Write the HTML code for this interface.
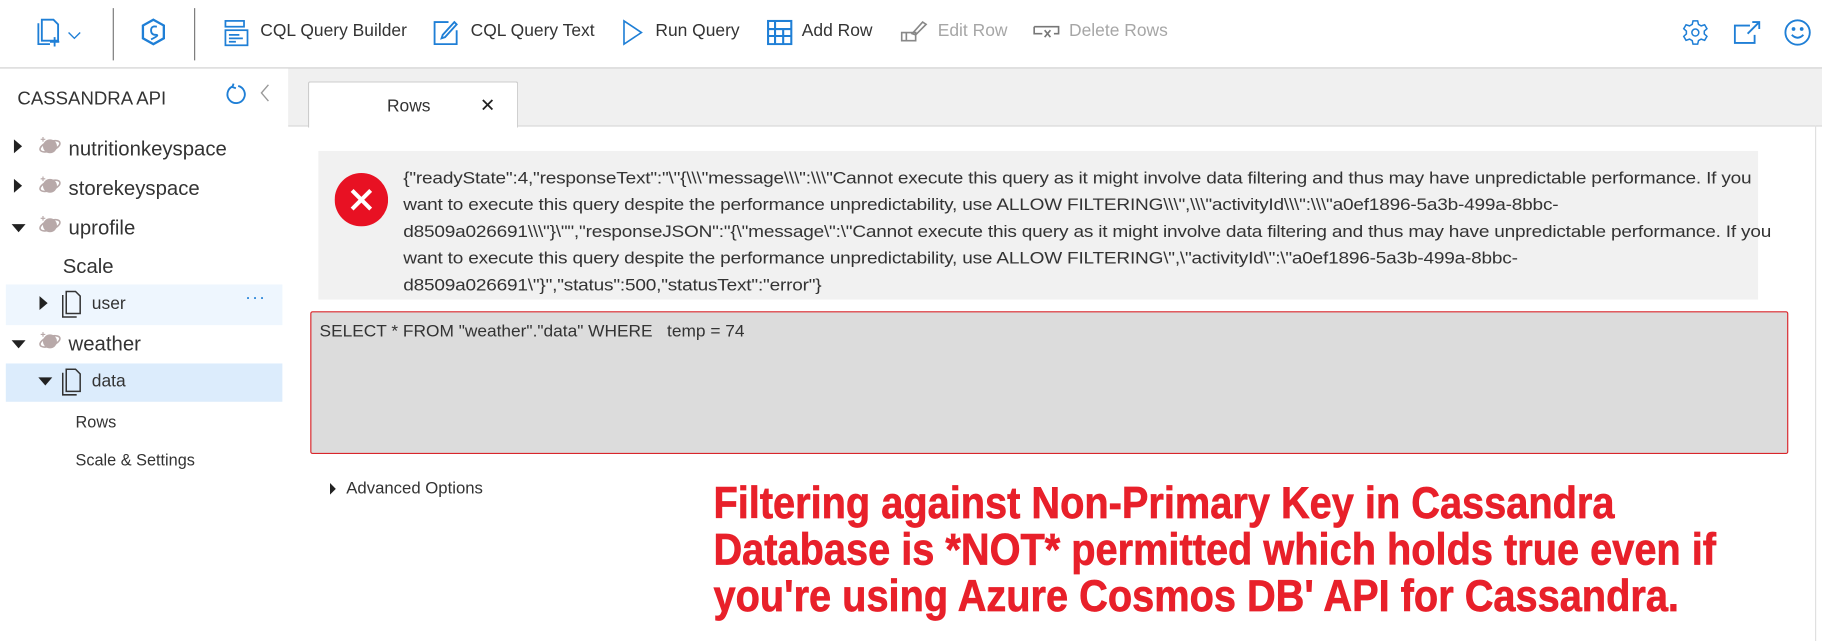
<!DOCTYPE html>
<html><head><meta charset="utf-8"><style>
html,body{margin:0;padding:0;width:1822px;height:641px;overflow:hidden;background:#fff}
#s{position:absolute;left:0;top:0;width:1568px;height:552px;transform:scale(1.16199,1.1612);transform-origin:0 0;font-family:"Liberation Sans",sans-serif;color:#333}
.a{position:absolute;white-space:nowrap}
.tb{font-size:15px;top:18px;color:#333}
.dis{color:#a6a6a6}
.tree{font-size:17.5px;color:#333}
.ic{position:absolute}
</style></head><body><div id="s">
<div class="a" style="left:0;top:58px;width:1568px;height:1px;background:#d0d0d0"></div>
<div class="a" style="left:97px;top:7px;width:1px;height:45px;background:#777"></div>
<div class="a" style="left:167px;top:7px;width:1px;height:45px;background:#777"></div>
<svg class="ic" style="left:32px;top:15px" width="60" height="28" viewBox="0 0 60 28" fill="none" stroke="#1f7fd6" stroke-width="1.6"><path d="M4 2h10l4 4v14H4z"/><path d="M1 5v18h10"/><path d="M15 17v8M11 21h8"/><path d="M27 13l5 5 5-5" stroke-width="1.2"/></svg>
<svg class="ic" style="left:120px;top:15px" width="24" height="26" viewBox="0 0 24 26" fill="none" stroke="#1f7fd6" stroke-width="2"><path d="M12 2l9 5v11l-9 5-9-5V7z"/><path d="M15 8q-5-1-5 3t4 4-4 4" stroke-width="1.6"/></svg>
<svg class="ic" style="left:193px;top:17px" width="22" height="24" viewBox="0 0 22 24" fill="none" stroke="#1f7fd6" stroke-width="1.5"><rect x="1" y="1" width="16" height="5"/><rect x="1" y="9" width="19" height="13"/><path d="M4 13h9M4 16h12M4 19h6"/></svg>
<div class="a tb" style="left:224px">CQL Query Builder</div>
<svg class="ic" style="left:373px;top:17px" width="22" height="22" viewBox="0 0 22 22" fill="none" stroke="#1f7fd6" stroke-width="1.6"><path d="M13 2H1v19h19V9"/><path d="M18 2l2 2-10 11-3 1 1-3z"/></svg>
<div class="a tb" style="left:405px">CQL Query Text</div>
<svg class="ic" style="left:535px;top:16px" width="20" height="24" viewBox="0 0 20 24" fill="none" stroke="#1f7fd6" stroke-width="1.4"><path d="M2 2l15 10L2 22z"/></svg>
<div class="a tb" style="left:564px">Run Query</div>
<svg class="ic" style="left:660px;top:17px" width="22" height="22" viewBox="0 0 22 22" fill="none" stroke="#1f7fd6" stroke-width="1.8"><path d="M1 1h20v20H1zM1 8h20M1 14h20M7 1v20M14 8v13"/></svg>
<div class="a tb" style="left:690px">Add Row</div>
<svg class="ic" style="left:775px;top:17px" width="24" height="20" viewBox="0 0 24 20" fill="none" stroke="#888" stroke-width="1.4"><path d="M1 11h12v7H1zM5 11v7"/><path d="M10 12l9-10 3 2-9 9z"/></svg>
<div class="a tb dis" style="left:807px">Edit Row</div>
<svg class="ic" style="left:889px;top:20px" width="24" height="14" viewBox="0 0 24 14" fill="none" stroke="#777" stroke-width="1.4"><path d="M1 3h21v6h-4M8 9H1V3"/><path d="M10 6l5 6M15 6l-5 6"/></svg>
<div class="a tb dis" style="left:920px">Delete Rows</div>
<svg class="ic" style="left:1448px;top:17px" width="22" height="22" viewBox="0 0 22 22" fill="none" stroke="#1f7fd6" stroke-width="1.3"><circle cx="11" cy="11" r="3"/><path d="M9 1h4l.7 3 2.3 1.3 3-1 2 3.4-2.3 2.1v2.4l2.3 2.1-2 3.4-3-1-2.3 1.3L13 21H9l-.7-3-2.3-1.3-3 1-2-3.4 2.3-2.1V9.8L1 7.7l2-3.4 3 1L8.3 4z"/></svg>
<svg class="ic" style="left:1492px;top:17px" width="24" height="22" viewBox="0 0 24 22" fill="none" stroke="#1f7fd6" stroke-width="1.6"><path d="M14 5H1v15h17v-7"/><path d="M12 12l10-10M16 2h6v6"/></svg>
<svg class="ic" style="left:1535px;top:16px" width="24" height="24" viewBox="0 0 24 24" fill="none" stroke="#1f7fd6" stroke-width="1.6"><circle cx="12" cy="12" r="10.5"/><circle cx="8.5" cy="9" r=".8" fill="#1f7fd6"/><circle cx="15.5" cy="9" r=".8" fill="#1f7fd6"/><path d="M7 14q5 5 10 0"/></svg>

<div class="a" style="left:15px;top:77px;font-size:16px;color:#333">CASSANDRA API</div>
<svg class="ic" style="left:194px;top:71px" width="20" height="20" viewBox="0 0 20 20" fill="none" stroke="#1f7fd6" stroke-width="1.6"><path d="M6 3.5A7.5 7.5 0 1 0 11 3"/><path d="M7 1l-1 3 3 1"/></svg>
<svg class="ic" style="left:223px;top:72px" width="10" height="16" viewBox="0 0 10 16" fill="none" stroke="#999" stroke-width="1.2"><path d="M8 1L2 8l6 7"/></svg>

<div class="a" style="left:5px;top:245px;width:238px;height:35px;background:#eef6fe"></div>
<div class="a" style="left:5px;top:313px;width:238px;height:33px;background:#dcecfc"></div>

<svg width="0" height="0" style="position:absolute"><defs>
<g id="pl"><ellipse cx="10" cy="9" rx="9" ry="4" transform="rotate(-20 10 9)" fill="none" stroke="#b8a9a9" stroke-width="1.4"/><circle cx="10" cy="9" r="6" fill="#b8a9a9"/><path d="M4 1v4M2 3h4" stroke="#b8a9a9"/></g>
<g id="doc" fill="none" stroke="#333" stroke-width="1.3"><path d="M4 1h8l4 4v15H4z"/><path d="M1 4v19h12"/></g>
</defs></svg>

<div class="a" style="left:12px;top:120px;width:0;height:0;border-top:6px solid transparent;border-bottom:6px solid transparent;border-left:7px solid #222"></div>
<svg class="ic" style="left:33px;top:117px" width="22" height="20"><use href="#pl"/></svg>
<div class="a tree" style="left:59px;top:118px">nutritionkeyspace</div>
<div class="a" style="left:12px;top:154px;width:0;height:0;border-top:6px solid transparent;border-bottom:6px solid transparent;border-left:7px solid #222"></div>
<svg class="ic" style="left:33px;top:151px" width="22" height="20"><use href="#pl"/></svg>
<div class="a tree" style="left:59px;top:152px">storekeyspace</div>
<div class="a" style="left:10px;top:193px;width:0;height:0;border-left:6px solid transparent;border-right:6px solid transparent;border-top:7px solid #222"></div>
<svg class="ic" style="left:33px;top:185px" width="22" height="20"><use href="#pl"/></svg>
<div class="a tree" style="left:59px;top:186px">uprofile</div>
<div class="a tree" style="left:54px;top:219px">Scale</div>
<div class="a" style="left:34px;top:255px;width:0;height:0;border-top:6px solid transparent;border-bottom:6px solid transparent;border-left:7px solid #222"></div>
<svg class="ic" style="left:53px;top:250px" width="18" height="25"><use href="#doc"/></svg>
<div class="a" style="left:79px;top:253px;font-size:15px">user</div>
<div class="a" style="left:211px;top:248px;font-size:15px;color:#1f7fd6;letter-spacing:1px">···</div>
<div class="a" style="left:10px;top:293px;width:0;height:0;border-left:6px solid transparent;border-right:6px solid transparent;border-top:7px solid #222"></div>
<svg class="ic" style="left:33px;top:285px" width="22" height="20"><use href="#pl"/></svg>
<div class="a tree" style="left:59px;top:286px">weather</div>
<div class="a" style="left:33px;top:325px;width:0;height:0;border-left:6px solid transparent;border-right:6px solid transparent;border-top:7px solid #222"></div>
<svg class="ic" style="left:53px;top:317px" width="18" height="25"><use href="#doc"/></svg>
<div class="a" style="left:79px;top:320px;font-size:15px">data</div>
<div class="a" style="left:65px;top:355px;font-size:14px">Rows</div>
<div class="a" style="left:65px;top:388px;font-size:14px">Scale &amp; Settings</div>

<div class="a" style="left:248px;top:59px;width:1320px;height:49px;background:#f0f0f0"></div>
<div class="a" style="left:248px;top:108px;width:1320px;height:1px;background:#d6d6d6"></div>
<div class="a" style="left:1562px;top:108px;width:1px;height:444px;background:#e0e0e0"></div>
<div class="a" style="left:265px;top:70px;width:179px;height:39px;background:#fff;border:1px solid #ccc;border-bottom:none;border-radius:2px 2px 0 0"></div>
<div class="a" style="left:333px;top:83px;font-size:15px">Rows</div>
<div class="a" style="left:413px;top:81px;font-size:16px;color:#222">✕</div>

<div class="a" style="left:274px;top:130px;width:1239px;height:128px;background:#f1f1f1"></div>
<svg class="ic" style="left:288px;top:149px" width="46" height="46" viewBox="0 0 46 46"><circle cx="23" cy="23" r="23" fill="#e81123"/><path d="M15 15l16 16M31 15L15 31" stroke="#fff" stroke-width="3.5"/></svg>
<div class="a" style="left:347px;top:142px;font-size:14px;line-height:23px;color:#333;letter-spacing:-0.15px;transform:scaleX(1.17);transform-origin:0 0">{"readyState":4,"responseText":"\"{\\\"message\\\":\\\"Cannot execute this query as it might involve data filtering and thus may have unpredictable performance. If you<br>want to execute this query despite the performance unpredictability, use ALLOW FILTERING\\\",\\\"activityId\\\":\\\"a0ef1896-5a3b-499a-8bbc-<br>d8509a026691\\\"}\"","responseJSON":"{\"message\":\"Cannot execute this query as it might involve data filtering and thus may have unpredictable performance. If you<br>want to execute this query despite the performance unpredictability, use ALLOW FILTERING\",\"activityId\":\"a0ef1896-5a3b-499a-8bbc-<br>d8509a026691\"}","status":500,"statusText":"error"}</div>

<div class="a" style="left:267px;top:268px;width:1270px;height:121px;background:#dcdcdc;border:1px solid #d9262b;border-radius:2px"></div>
<div class="a" style="left:275px;top:278px;font-size:14.2px;color:#333;transform:scaleX(1.05);transform-origin:0 0">SELECT * FROM "weather"."data" WHERE &nbsp; temp = 74</div>

<div class="a" style="left:284px;top:416px;width:0;height:0;border-top:5px solid transparent;border-bottom:5px solid transparent;border-left:5px solid #222"></div>
<div class="a" style="left:298px;top:413px;font-size:14.4px">Advanced Options</div>

<div class="a" style="left:614px;top:414px;font-size:38px;line-height:40px;font-weight:bold;color:#e8202a;transform:scaleX(0.9);transform-origin:0 0;-webkit-text-stroke:0.6px #e8202a">Filtering against Non-Primary Key in Cassandra<br>Database is *NOT* permitted which holds true even if<br>you're using Azure Cosmos DB' API for Cassandra.</div>
</div></body></html>
